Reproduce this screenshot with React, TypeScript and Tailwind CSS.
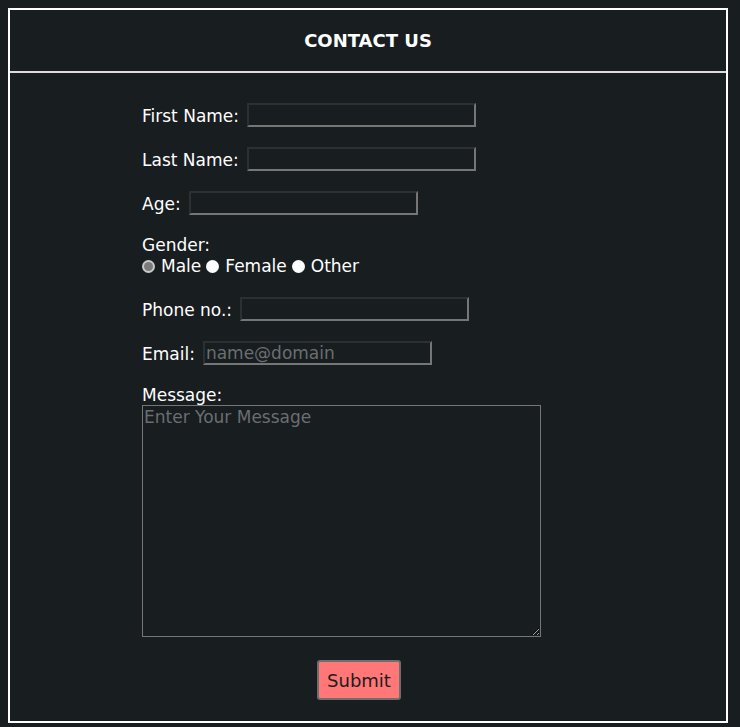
import React from 'react';

const FONT = { fontFamily: '"DejaVu Sans", Verdana, sans-serif' };

const inputCls =
  'h-[24px] w-[229px] bg-[#181d20] border-2 border-t-[#2b3034] border-l-[#2b3034] border-b-[#767676] border-r-[#767676] px-[1px] text-[17px] leading-[20px] text-white placeholder:text-[#6b6e70] outline-none';

const Field = ({ label, placeholder }: { label: string; placeholder?: string }) => (
  <div className="flex h-[24px] items-center">
    <label className="mr-[8px] leading-[24px] pt-[2px]">{label}</label>
    <input className={inputCls} placeholder={placeholder} style={FONT} />
  </div>
);

const Radio = ({ checked, label }: { checked?: boolean; label: string }) => (
  <span className="inline-flex items-center">
    {checked ? (
      <span className="flex h-[13px] w-[13px] items-center justify-center rounded-full bg-[#c9c9c9]">
        <span className="h-[9px] w-[9px] rounded-full bg-[#7b7b7b]" />
      </span>
    ) : (
      <span className="h-[13px] w-[13px] rounded-full bg-white" />
    )}
    <span className="ml-[6px] mr-[5px]">{label}</span>
  </span>
);

export default function App() {
  return (
    <div className="min-h-[727px] bg-[#181d20] p-[8px] text-[17px] text-white" style={FONT}>
      <div className="flex h-[715px] w-[720px] flex-col border-2 border-white">
        <div className="flex h-[63px] items-center justify-center border-b-2 border-[#dcdcdc]">
          <h1 className="text-[18px] font-bold">CONTACT US</h1>
        </div>
        <form className="ml-[132px] mt-[30px] flex flex-col" onSubmit={(e) => e.preventDefault()}>
          <div className="flex flex-col gap-[20px]">
            <Field label="First Name:" />
            <Field label="Last Name:" />
            <Field label="Age:" />
            <div className="flex flex-col">
              <span className="leading-[21px]">Gender:</span>
              <div className="flex items-center leading-[21px]">
                <Radio checked label="Male" />
                <Radio label="Female" />
                <Radio label="Other" />
              </div>
            </div>
            <Field label="Phone no.:" />
            <Field label="Email:" placeholder="name@domain" />
            <div className="flex flex-col">
              <label className="leading-[20px]">Message:</label>
              <textarea
                className="h-[232px] w-[399px] resize border border-[#767676] bg-[#181d20] px-[1px] text-[17px] leading-[22px] text-white placeholder:text-[#6b6e70] outline-none"
                placeholder="Enter Your Message"
                style={FONT}
              />
            </div>
          </div>
          <button
            type="submit"
            className="ml-[175px] mt-[23px] h-[40px] w-[84px] rounded-[3px] border-2 border-[#6e6e6e] bg-[#ff7777] text-[18px] text-[#1d1d1d]"
            style={FONT}
          >
            Submit
          </button>
        </form>
      </div>
    </div>
  );
}
